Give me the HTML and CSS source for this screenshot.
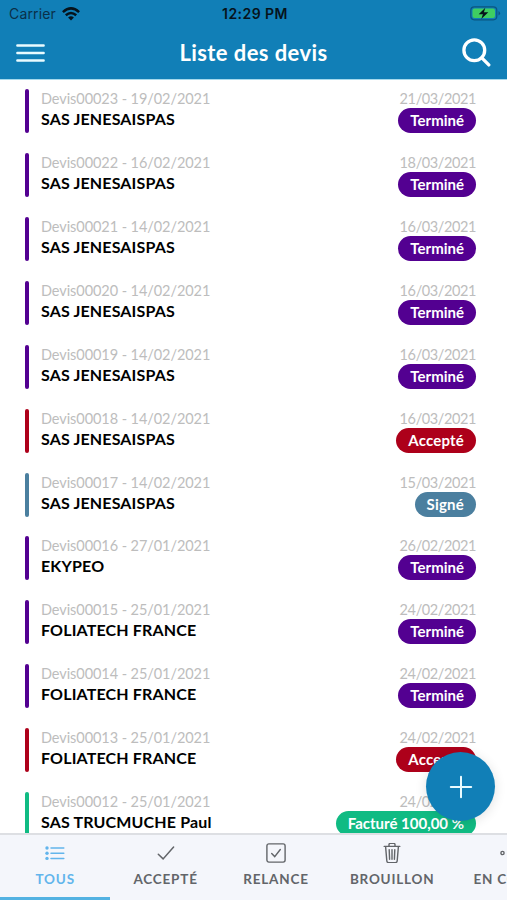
FILE: index.html
```html
<!DOCTYPE html>
<html lang="fr">
<head>
<meta charset="utf-8">
<title>Liste des devis</title>
<link rel="stylesheet" href="styles.css">
</head>
<body>
<div class="app">
  <header class="header">
    <div class="status">
      <div class="carrier"><span>Carrier</span>
        <svg width="18" height="14" viewBox="0 0 18 14" fill="none" stroke="#06131b" stroke-width="2.5"><path d="M.9 5.1Q9-2.3 17.1 5.1M3.8 8.3Q9 3.7 14.2 8.3"/><path d="M6.1 10.5Q9 8.2 11.9 10.5L9 13.6Z" fill="#06131b" stroke="none"/></svg>
      </div>
      <span class="clock">12:29 PM</span>
      <svg class="battery" width="31" height="15" viewBox="0 0 31 15"><rect x=".8" y=".8" width="26" height="13" rx="3.5" fill="none" stroke="#0b5680" stroke-width="1.2"/><rect x="2.5" y="2.5" width="22.5" height="9.6" rx="2" fill="#3fce62"/><path d="M28.5 5v4.5q1.6-.7 1.6-2.2T28.5 5Z" fill="#0b5680"/><path d="M15.3 1.8 8.7 8.3h4.2L11.3 13l7-6.8h-4.4Z" fill="#06131b"/></svg>
    </div>
    <div class="nav">
      <svg width="29" height="19" viewBox="0 0 29 19" stroke="#e9fbff" stroke-width="2.5" stroke-linecap="round"><path d="M1.4 1.5h26.2M1.4 9h26.2M1.4 16.5h26.2"/></svg>
      <h1>Liste des devis</h1>
      <svg width="29" height="30" viewBox="0 0 29 30" fill="none" stroke="#fff" stroke-width="3.3" stroke-linecap="round"><circle cx="12.3" cy="12.3" r="10.4"/><path d="m19.8 19.9 7 7"/></svg>
    </div>
  </header>
  <main class="list">
    <article class="row purple"><div class="info"><p class="ref">Devis00023 - 19/02/2021</p><h2>SAS JENESAISPAS</h2></div><div class="state"><p class="date">21/03/2021</p><span class="pill">Terminé</span></div></article>
    <article class="row purple"><div class="info"><p class="ref">Devis00022 - 16/02/2021</p><h2>SAS JENESAISPAS</h2></div><div class="state"><p class="date">18/03/2021</p><span class="pill">Terminé</span></div></article>
    <article class="row purple"><div class="info"><p class="ref">Devis00021 - 14/02/2021</p><h2>SAS JENESAISPAS</h2></div><div class="state"><p class="date">16/03/2021</p><span class="pill">Terminé</span></div></article>
    <article class="row purple"><div class="info"><p class="ref">Devis00020 - 14/02/2021</p><h2>SAS JENESAISPAS</h2></div><div class="state"><p class="date">16/03/2021</p><span class="pill">Terminé</span></div></article>
    <article class="row purple"><div class="info"><p class="ref">Devis00019 - 14/02/2021</p><h2>SAS JENESAISPAS</h2></div><div class="state"><p class="date">16/03/2021</p><span class="pill">Terminé</span></div></article>
    <article class="row red"><div class="info"><p class="ref">Devis00018 - 14/02/2021</p><h2>SAS JENESAISPAS</h2></div><div class="state"><p class="date">16/03/2021</p><span class="pill">Accepté</span></div></article>
    <article class="row blue"><div class="info"><p class="ref">Devis00017 - 14/02/2021</p><h2>SAS JENESAISPAS</h2></div><div class="state"><p class="date">15/03/2021</p><span class="pill">Signé</span></div></article>
    <article class="row purple"><div class="info"><p class="ref">Devis00016 - 27/01/2021</p><h2>EKYPEO</h2></div><div class="state"><p class="date">26/02/2021</p><span class="pill">Terminé</span></div></article>
    <article class="row purple"><div class="info"><p class="ref">Devis00015 - 25/01/2021</p><h2>FOLIATECH FRANCE</h2></div><div class="state"><p class="date">24/02/2021</p><span class="pill">Terminé</span></div></article>
    <article class="row purple"><div class="info"><p class="ref">Devis00014 - 25/01/2021</p><h2>FOLIATECH FRANCE</h2></div><div class="state"><p class="date">24/02/2021</p><span class="pill">Terminé</span></div></article>
    <article class="row red"><div class="info"><p class="ref">Devis00013 - 25/01/2021</p><h2>FOLIATECH FRANCE</h2></div><div class="state"><p class="date">24/02/2021</p><span class="pill">Accepté</span></div></article>
    <article class="row green"><div class="info"><p class="ref">Devis00012 - 25/01/2021</p><h2>SAS TRUCMUCHE Paul</h2></div><div class="state"><p class="date">24/02/2021</p><span class="pill">Facturé 100,00 %</span></div></article>
  </main>
  <nav class="tabs">
    <div class="tab active"><svg width="20" height="20" viewBox="0 0 20 20" fill="none" stroke="currentColor" stroke-width="1.5" stroke-linecap="round"><path d="M6 5h12.8M6 10.2h12.8M6 15.4h12.8"/><g fill="currentColor" stroke="none"><circle cx="2" cy="5" r="1.7"/><circle cx="2" cy="10.2" r="1.7"/><circle cx="2" cy="15.4" r="1.7"/></g></svg><span>TOUS</span></div>
    <div class="tab"><svg width="20" height="20" viewBox="0 0 20 20" fill="none" stroke="currentColor" stroke-width="1.5" stroke-linecap="round"><path d="m2.3 11.2 4.8 4.7L17.6 4.1"/></svg><span>ACCEPTÉ</span></div>
    <div class="tab"><svg width="20" height="20" viewBox="0 0 20 20" fill="none" stroke="currentColor" stroke-width="1.4" stroke-linecap="round"><rect x=".9" y=".9" width="18.2" height="18.2" rx="2"/><path d="m5.7 10.6 3 3 5.6-7.1"/></svg><span>RELANCE</span></div>
    <div class="tab wide"><svg width="20" height="20" viewBox="1 1 18 20" fill="none" stroke="currentColor" stroke-width="1.4" stroke-linecap="round"><path d="M2.2 4.4h15.6M3.6 4.6l1.2 14.1q.1 1.9 2 1.9h6.4q1.9 0 2-1.9l1.2-14.1M7 4.2V2.6Q7 1.4 8.2 1.4h3.6q1.2 0 1.2 1.2v1.6M7.2 7.6l.4 9.7M10 7.6v9.7M12.8 7.6l-.4 9.7"/></svg><span>BROUILLON</span></div>
    <div class="tab last"><svg width="20" height="20" viewBox="0 0 20 20" fill="none" stroke="currentColor" stroke-width="1.4"><circle cx="2.5" cy="10" r="1.6"/><circle cx="10" cy="10" r="1.6"/><circle cx="17.5" cy="10" r="1.6"/></svg><span>EN COURS</span></div>
  </nav>
  <button class="fab" aria-label="Ajouter"><svg width="24" height="24" viewBox="0 0 24 24" stroke="#e9fbff" stroke-width="2" stroke-linecap="round"><path d="M12 1.8v20.4M1.8 12h20.4"/></svg></button>
</div>
</body>
</html>
```

FILE: styles.css
```css
* { box-sizing: border-box; }
body { margin: 0; background: #fff; font-family: Lato, "Noto Sans", sans-serif; }
h1, h2, p { margin: 0; }
svg { display: block; flex: none; }
.app { position: relative; width: 507px; height: 900px; display: flex; flex-direction: column; overflow: hidden; }
.header { flex: none; height: 79px; background: #117fb7; }
.status { height: 27px; padding: 0 6px 0 9px; display: grid; grid-template-columns: 1fr auto 1fr; align-items: center; font: 14px/27px Inter, sans-serif; color: #06131b; }
.carrier { display: flex; align-items: center; gap: 6px; color: #0a3049; letter-spacing: .15px; }
.clock { font-weight: 600; font-size: 14px; letter-spacing: .45px; }
.battery { justify-self: end; }
.nav { height: 52px; padding: 0 16px; display: flex; align-items: center; justify-content: space-between; color: #fff; }
.nav h1 { font-size: 22px; line-height: 30px; font-weight: 700; letter-spacing: .42px; }
.list { flex: none; height: 754px; padding: 9px 31px 0 25px; overflow: hidden; border-top: 1px solid #a5d9ec; }
.row { height: 63.93px; display: flex; justify-content: space-between; align-items: flex-start; }
.row::before { content: ""; width: 4px; height: 44px; border-radius: 2px; background: var(--c); }
.purple { --c: #530091; }
.red { --c: #ad001a; }
.blue { --c: #4b7f9f; }
.green { --c: #10bb83; }
.info { flex: 1; padding-left: 12px; }
.ref, .date { font-size: 14.5px; line-height: 19px; color: #bdbdbd; white-space: nowrap; }
.ref { letter-spacing: -.07px; }
.date { letter-spacing: -.4px; }
.info h2 { font-size: 16px; line-height: 21px; font-weight: 700; color: #000; letter-spacing: .15px; }
.state { display: flex; flex-direction: column; align-items: flex-end; }
.pill { height: 25px; padding: 0 12px; border-radius: 13px; background: var(--c); color: #fff; font-size: 15px; line-height: 24px; font-weight: 700; white-space: nowrap; }
.red .pill, .blue .pill { letter-spacing: .2px; }
.tabs { flex: none; height: 67px; display: flex; background: #f4f6fb; border-top: 2px solid #dddfe3; }
.tab { flex: none; width: 110.4px; height: 65px; padding-top: 8px; display: flex; flex-direction: column; align-items: center; color: #626569; font-size: 13.5px; font-weight: 700; letter-spacing: .8px; white-space: nowrap; }
.tab svg { height: 20px; }
.tab span { margin-top: 7px; line-height: 18px; }
.tab.active { color: #62b5ec; border-bottom: 3px solid #53b2e2; }
.tab.wide { width: 122px; }
.tab.last { width: 114px; }
.fab { position: absolute; right: 12px; bottom: 79px; width: 69px; height: 69px; padding: 0; border: 0; border-radius: 50%; background: #117fb7; display: flex; align-items: center; justify-content: center; box-shadow: 0 2px 12px rgba(0, 0, 0, .12); }
```
